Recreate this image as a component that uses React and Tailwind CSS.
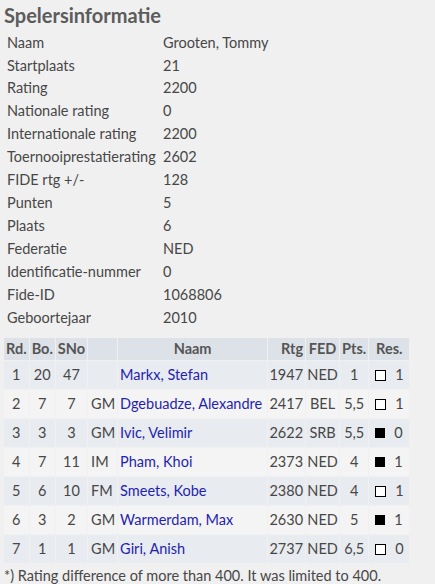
import React from 'react';

const info = [
  ['Naam', 'Grooten, Tommy'],
  ['Startplaats', '21'],
  ['Rating', '2200'],
  ['Nationale rating', '0'],
  ['Internationale rating', '2200'],
  ['Toernooiprestatierating', '2602'],
  ['FIDE rtg +/-', '128'],
  ['Punten', '5'],
  ['Plaats', '6'],
  ['Federatie', 'NED'],
  ['Identificatie-nummer', '0'],
  ['Fide-ID', '1068806'],
  ['Geboortejaar', '2010'],
];

const games = [
  [1, 20, 47, '', 'Markx, Stefan', 1947, 'NED', '1', 'w', 1],
  [2, 7, 7, 'GM', 'Dgebuadze, Alexandre', 2417, 'BEL', '5,5', 'w', 1],
  [3, 3, 3, 'GM', 'Ivic, Velimir', 2622, 'SRB', '5,5', 'b', 0],
  [4, 7, 11, 'IM', 'Pham, Khoi', 2373, 'NED', '4', 'b', 1],
  [5, 6, 10, 'FM', 'Smeets, Kobe', 2380, 'NED', '4', 'w', 1],
  [6, 3, 2, 'GM', 'Warmerdam, Max', 2630, 'NED', '5', 'b', 1],
  [7, 1, 1, 'GM', 'Giri, Anish', 2737, 'NED', '6,5', 'w', 0],
];

// little board-colour marker in the result column
const ColorBox = ({ c }) =>
  c === 'w' ? (
    <span className="inline-block w-[11px] h-[11px] border border-black bg-white"></span>
  ) : (
    <span className="inline-block w-[10px] h-[10px] bg-black"></span>
  );

export default function App() {
  return (
    <div className="min-h-[584px] bg-[#f0f0f0] text-[14.5px] text-[#474747] font-['Lato','Open_Sans',sans-serif] pl-[3px] pt-[3px]">
      {/* Title */}
      <h2 className="text-[20px] font-bold text-[#5c5c5c] leading-[24px] pl-[1px]">Spelersinformatie</h2>

      {/* Player info */}
      <table className="mt-[4px] border-separate border-spacing-0">
        <tbody>
          {info.map(([k, v]) => (
            <tr key={k} className="h-[22.95px]">
              <td className="pl-[4px] pr-[6px] w-[160px] whitespace-nowrap">{k}</td>
              <td>{v}</td>
            </tr>
          ))}
        </tbody>
      </table>

      {/* Games */}
      <table className="mt-[8px] border-separate border-spacing-[1px] whitespace-nowrap">
        <thead>
          <tr className="bg-[#dde2e8] h-[22px] font-bold text-[#555]">
            <th className="px-[2px] w-[23px]">Rd.</th>
            <th className="px-[2px] w-[25px]">Bo.</th>
            <th className="px-[2px] w-[30px]">SNo</th>
            <th className="w-[29px]"></th>
            <th className="px-[2px] w-[149px]">Naam</th>
            <th className="px-[2px] w-[37px] text-right">Rtg</th>
            <th className="px-[2px] w-[33px]">FED</th>
            <th className="px-[2px] w-[28px]">Pts.</th>
            <th className="px-[2px] w-[40px]">Res.</th>
          </tr>
        </thead>
        <tbody>
          {games.map((g, i) => (
            <tr key={g[0]} className={`h-[28px] ${i % 2 === 0 ? 'bg-[#e8ebef]' : 'bg-[#f4f4f4]'}`}>
              <td className="text-center">{g[0]}</td>
              <td className="text-center">{g[1]}</td>
              <td className="text-center">{g[2]}</td>
              <td className="pl-[3px]">{g[3]}</td>
              <td className="pl-[2px] text-[#1f1fb0]">{g[4]}</td>
              <td className="text-right pr-[2px]">{g[5]}</td>
              <td className="text-center">{g[6]}</td>
              <td className="text-center">{g[7]}</td>
              <td className="pl-[6px]">
                <div className="flex items-center gap-[9px]">
                  <ColorBox c={g[8]} />
                  <span>{g[9]}</span>
                </div>
              </td>
            </tr>
          ))}
        </tbody>
      </table>

      <p className="pl-[1px] mt-[1px]">*) Rating difference of more than 400. It was limited to 400.</p>
    </div>
  );
}
